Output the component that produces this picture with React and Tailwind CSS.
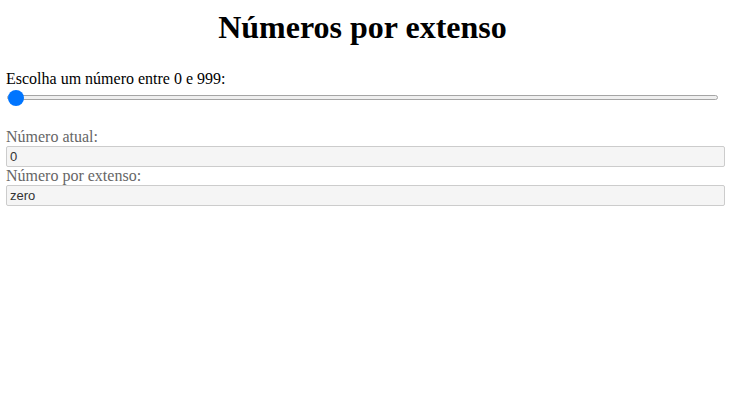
export default function App() {
  return (
    <div className="px-[6px] pt-[9px]" style={{ fontFamily: '"Liberation Serif", serif' }}>
      <h1 className="pr-[6px] text-center text-[32px] font-bold leading-[37px] text-black" style={{ fontFamily: '"Liberation Serif", serif' }}>
        Números por extenso
      </h1>
      <div className="mt-[24px] text-[16px] leading-[18px] text-black">Escolha um número entre 0 e 999:</div>
      <input
        type="range"
        min="0"
        max="999"
        defaultValue="0"
        className="m-0 ml-[1px] mt-[1px] block h-[16px] w-[711px] cursor-pointer appearance-none bg-transparent [&::-webkit-slider-runnable-track]:h-[5px] [&::-webkit-slider-runnable-track]:rounded-full [&::-webkit-slider-runnable-track]:border [&::-webkit-slider-runnable-track]:border-solid [&::-webkit-slider-runnable-track]:border-[#a5a5a5] [&::-webkit-slider-runnable-track]:bg-[#efefef] [&::-webkit-slider-thumb]:mt-[-6px] [&::-webkit-slider-thumb]:h-4 [&::-webkit-slider-thumb]:w-4 [&::-webkit-slider-thumb]:appearance-none [&::-webkit-slider-thumb]:rounded-full [&::-webkit-slider-thumb]:bg-[#0075ff]"
      />
      <div className="mt-[23px] text-[16px] leading-[18px] text-[#666]">Número atual:</div>
      <div
        className="box-border flex h-[21px] w-full items-center rounded-[2px] border border-[#ccc] bg-[#f5f5f5] px-[3px] text-[13px] text-[#333]"
        style={{ fontFamily: '"Liberation Sans", Arial, sans-serif' }}
      >
        0
      </div>
      <div className="text-[16px] leading-[18px] text-[#666]">Número por extenso:</div>
      <div
        className="box-border flex h-[21px] w-full items-center rounded-[2px] border border-[#ccc] bg-[#f5f5f5] px-[3px] text-[13px] text-[#333]"
        style={{ fontFamily: '"Liberation Sans", Arial, sans-serif' }}
      >
        zero
      </div>
    </div>
  );
}
